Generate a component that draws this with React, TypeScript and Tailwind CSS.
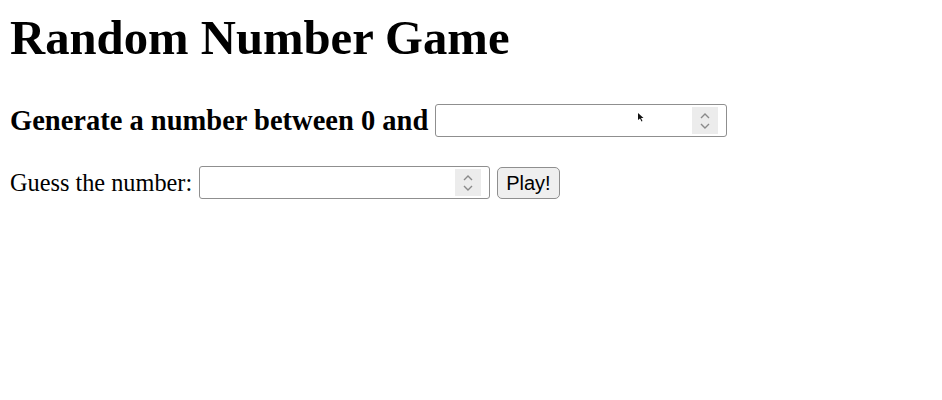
import { useState } from "react";

function NumberBox({ width, value, onChange }: { width: string; value: string; onChange: (v: string) => void }) {
  return (
    <div className={`flex items-center h-[33px] ${width} rounded-[3px] border border-[#8f8f8f] bg-white pl-1 pr-[8px]`}>
      <input
        type="text"
        inputMode="numeric"
        value={value}
        onChange={(e) => onChange(e.target.value)}
        className="flex-1 min-w-0 h-full bg-transparent outline-none text-[20px] font-['Liberation_Sans',sans-serif]"
      />
      <div className="flex flex-col items-center justify-center w-[26px] h-[27px] bg-[#ececec]">
        <svg width="12" height="20" viewBox="0 0 12 20" fill="none" stroke="#8a8a8a" strokeWidth="1.4">
          <path d="M2 7 L6 3 L10 7" />
          <path d="M2 13 L6 17 L10 13" />
        </svg>
      </div>
    </div>
  );
}

export default function App() {
  const [max, setMax] = useState("");
  const [guess, setGuess] = useState("");

  return (
    <div className="min-h-[400px] bg-white px-[10px] font-['Liberation_Serif',serif] text-black">
      <h1 className="pt-[12px] text-[48.7px] font-bold leading-[52px]">Random Number Game</h1>
      <div className="relative mt-[40px] flex items-center gap-[7px]">
        <h3 className="text-[28.5px] font-bold leading-[32px]">Generate a number between 0 and</h3>
        <NumberBox width="w-[292px]" value={max} onChange={setMax} />
        <svg className="absolute left-[628px] top-[9px]" width="6" height="9" viewBox="0 0 6 9">
          <path d="M0 0 L0 7 L2 5.5 L3.5 8.5 L4.5 8 L3 5 L5.5 5 Z" fill="#111" />
        </svg>
      </div>
      <div className="mt-[29px] flex items-center gap-[7px]">
        <span className="text-[24.3px] leading-[28px]">Guess the number:</span>
        <NumberBox width="w-[291px]" value={guess} onChange={setGuess} />
        <button className="h-[32px] rounded-[5px] border border-[#8f8f8f] bg-[#efefef] px-[8px] text-[20px] font-['Liberation_Sans',sans-serif]">
          Play!
        </button>
      </div>
    </div>
  );
}
